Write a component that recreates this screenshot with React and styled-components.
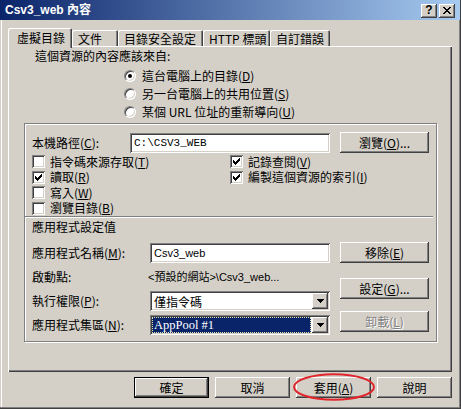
import React from "react";
import styled, { createGlobalStyle, css } from "styled-components";

const Global = createGlobalStyle`
  html, body { margin: 0; padding: 0; background: #d4d0c8; }
  body {
    font-family: "Noto Sans CJK TC", "Noto Sans", sans-serif;
    font-size: 12px;
    color: #000;
  }
  * { box-sizing: border-box; }
  u { text-decoration: underline; text-underline-offset: 1px; }
`;

const raised = css`
  box-shadow: inset -1px -1px #404040, inset 1px 1px #ffffff,
    inset -2px -2px #808080, inset 2px 2px #d4d0c8;
`;
const sunken = css`
  box-shadow: inset 1px 1px #808080, inset -1px -1px #ffffff,
    inset 2px 2px #404040, inset -2px -2px #d4d0c8;
`;

const Window = styled.div`
  position: relative;
  width: 461px;
  height: 409px;
  background: #d4d0c8;
  display: flex;
  flex-direction: column;
  overflow: hidden;
  box-shadow: inset -1px -1px #404040, inset -2px -2px #808080,
    inset 1px 0 #d4d0c8, inset 2px 0 #ffffff;
`;

const TitleBar = styled.div`
  flex: none;
  height: 20px;
  margin-right: 1px;
  display: flex;
  align-items: center;
  padding: 0 5px 0 5px;
  background: linear-gradient(to right, #0a246a 0%, #a6caf0 100%);
`;

const Title = styled.span`
  flex: 1;
  color: #fff;
  font-weight: bold;
  font-family: "Liberation Sans", "Noto Sans CJK TC", sans-serif;
  font-size: 12px;
  line-height: 14px;
  white-space: nowrap;
`;

const CapBtn = styled.div`
  width: 16px;
  height: 14px;
  margin-top: 1px;
  margin-left: ${(p) => p.$gap || 0}px;
  background: #d4d0c8;
  ${raised};
  display: flex;
  align-items: center;
  justify-content: center;
  font-family: "Liberation Sans", sans-serif;
  font-weight: bold;
  font-size: 12px;
  line-height: 12px;
  padding-bottom: 1px;
`;

const Body = styled.div`
  flex: 1;
  display: flex;
  flex-direction: column;
  padding: 8px 9px 0 8px;
`;

const TabStrip = styled.div`
  height: 18px;
  display: flex;
  align-items: flex-end;
  position: relative;
  z-index: 2;
`;

const Tab = styled.div`
  width: ${(p) => p.$w}px;
  height: ${(p) => (p.$active ? 20 : 16)}px;
  margin-bottom: ${(p) => (p.$active ? -2 : 0)}px;
  padding-left: ${(p) => (p.$active ? 9 : 6)}px;
  background: #d4d0c8;
  border-top-left-radius: 2px;
  border-top-right-radius: 2px;
  box-shadow: inset 1px 1px #ffffff, inset -1px 0 #404040, inset -2px 0 #808080;
  display: flex;
  align-items: center;
  line-height: 14px;
  white-space: nowrap;
  padding-top: ${(p) => (p.$active ? 0 : 1)}px;
  position: relative;
  z-index: ${(p) => (p.$active ? 3 : 1)};
`;

const Panel = styled.div`
  width: 444px;
  height: 326px;
  padding: 3px 0 0 16px;
  display: flex;
  flex-direction: column;
  box-shadow: inset 1px 1px #ffffff, inset -1px -1px #404040,
    inset -2px -2px #808080;
`;

const Text = styled.div`
  line-height: 14px;
  white-space: nowrap;
  margin-left: ${(p) => p.$ml || 0}px;
  margin-top: ${(p) => p.$mt || 0}px;
`;

const RadioList = styled.div`
  margin-top: 4px;
  margin-left: 100px;
  display: flex;
  flex-direction: column;
`;

const OptionRow = styled.label`
  height: ${(p) => p.$h || 18}px;
  display: flex;
  align-items: center;
  line-height: 14px;
  white-space: nowrap;
`;

const RadioCircle = styled.span`
  flex: none;
  width: 12px;
  height: 12px;
  margin-right: 6px;
  border-radius: 50%;
  background: #fff;
  border: 1px solid;
  border-color: #808080 #ffffff #ffffff #808080;
  box-shadow: inset 1px 1px #404040, inset -1px -1px #d4d0c8;
  display: flex;
  align-items: center;
  justify-content: center;
  &::after {
    content: "";
    display: ${(p) => (p.$on ? "block" : "none")};
    width: 4px;
    height: 4px;
    border-radius: 50%;
    background: #000;
  }
`;

const CheckBox = styled.span`
  flex: none;
  width: 13px;
  height: 13px;
  margin-right: 5px;
  background: #fff;
  ${sunken};
  display: block;
  svg { display: block; }
`;

const GroupBox = styled.div`
  width: 413px;
  height: 219px;
  margin-top: 2px;
  padding: 8px 0 0 7px;
  border: 1px solid #808080;
  box-shadow: 1px 1px 0 #ffffff, inset 1px 1px 0 #ffffff;
  display: flex;
  flex-direction: column;
`;

const PathRow = styled.div`
  display: grid;
  grid-template-columns: 98px 200px 89px;
  height: 21px;
  align-items: start;
`;

const RowLabel = styled.div`
  line-height: 14px;
  white-space: nowrap;
  align-self: center;
`;

const Field = styled.div`
  height: 20px;
  background: #fff;
  ${sunken};
  display: flex;
  align-items: center;
  padding: 0 4px;
  white-space: nowrap;
  font-family: ${(p) => p.$font || `"Noto Sans CJK TC", sans-serif`};
  font-size: ${(p) => p.$size || 12}px;
  align-self: center;
`;

const Button = styled.div`
  width: ${(p) => p.$w || 89}px;
  height: 21px;
  margin-left: ${(p) => p.$ml || 0}px;
  margin-top: ${(p) => p.$mt || 0}px;
  background: #d4d0c8;
  display: flex;
  align-items: center;
  justify-content: center;
  line-height: 14px;
  white-space: nowrap;
  ${(p) =>
    p.$default
      ? css`
          box-shadow: inset 0 0 0 1px #000000, inset -2px -2px #404040,
            inset 2px 2px #ffffff, inset -3px -3px #808080;
        `
      : raised};
  ${(p) =>
    p.$disabled &&
    css`
      color: #808080;
      text-shadow: 1px 1px 0 #ffffff;
    `}
`;

const CheckCols = styled.div`
  margin-top: 1px;
  display: flex;
`;

const CheckCol = styled.div`
  width: ${(p) => p.$w || "auto"};
  display: flex;
  flex-direction: column;
`;

const Separator = styled.div`
  height: 2px;
  margin: 0 3px 0 -7px;
  border-top: 1px solid #808080;
  border-bottom: 1px solid #ffffff;
`;

const AppArea = styled.div`
  margin-top: 8px;
  display: flex;
  align-items: flex-start;
`;

const AppGrid = styled.div`
  display: grid;
  grid-template-columns: 118px 180px;
  grid-auto-rows: 22px;
  row-gap: 2px;
`;

const StaticValue = styled.div`
  margin-left: -2px;
  align-self: center;
  white-space: nowrap;
  line-height: 14px;
  font-family: "Liberation Sans", "Noto Sans CJK TC", sans-serif;
  font-size: 11px;
`;

const ButtonCol = styled.div`
  margin-left: 10px;
  display: flex;
  flex-direction: column;
`;

const Select = styled.div`
  height: 20px;
  align-self: center;
  background: #fff;
  ${sunken};
  padding: 2px;
  display: flex;
  align-items: stretch;
`;

const SelValue = styled.div`
  flex: 1;
  display: flex;
  align-items: center;
  padding-left: 2px;
  margin-right: 1px;
  white-space: nowrap;
  ${(p) =>
    p.$hl &&
    css`
      background: #0a246a;
      color: #fff;
      outline: 1px dotted #e8e4b0;
      outline-offset: -1px;
      font-family: "Liberation Serif", serif;
      font-size: 12.5px;
    `}
`;

const DropBtn = styled.div`
  flex: none;
  width: 16px;
  height: 16px;
  background: #d4d0c8;
  ${raised};
  display: flex;
  align-items: center;
  justify-content: center;
  svg { display: block; }
`;

const ButtonRow = styled.div`
  margin-top: 5px;
  display: flex;
  justify-content: flex-end;
  gap: 6px;
`;

const Marked = styled.div`
  position: relative;
  svg.mark {
    position: absolute;
    left: -3px;
    top: -4px;
    pointer-events: none;
  }
`;

const Check = () => (
  <svg width="13" height="13" viewBox="0 0 13 13" shapeRendering="crispEdges">
    <path
      fill="#000"
      d="M9 3h1v1h-1z M8 4h2v1h-2z M3 5h1v1h-1z M7 5h3v1h-3z M3 6h2v1h-2z M6 6h3v1h-3z M3 7h5v1h-5z M4 8h3v1h-3z M5 9h1v1h-1z"
    />
  </svg>
);

const Arrow = () => (
  <svg width="7" height="4" viewBox="0 0 7 4" shapeRendering="crispEdges">
    <path fill="#000" d="M0 0h7v1h-7z M1 1h5v1h-5z M2 2h3v1h-3z M3 3h1v1h-1z" />
  </svg>
);

const CheckItem = ({ on, children }) => (
  <OptionRow $h={15.5}>
    <CheckBox>{on && <Check />}</CheckBox>
    {children}
  </OptionRow>
);

const RadioItem = ({ on, children }) => (
  <OptionRow $h={18}>
    <RadioCircle $on={on} />
    {children}
  </OptionRow>
);

const DropDown = ({ value, hl }) => (
  <Select>
    <SelValue $hl={hl}>{value}</SelValue>
    <DropBtn>
      <Arrow />
    </DropBtn>
  </Select>
);

export default function App() {
  const tabs = [
    { t: "虛擬目錄", w: 64, a: true },
    { t: "文件", w: 46 },
    { t: "目錄安全設定", w: 85 },
    { t: "HTTP 標頭", w: 67 },
    { t: "自訂錯誤", w: 60 },
  ];
  return (
    <>
      <Global />
      <Window>
        <TitleBar>
          <Title>Csv3_web 內容</Title>
          <CapBtn>?</CapBtn>
          <CapBtn $gap={2}>
            <svg width="8" height="7" viewBox="0 0 8 7" shapeRendering="crispEdges">
              <path
                fill="#000"
                d="M0 0h2v1h-2z M6 0h2v1h-2z M1 1h2v1h-2z M5 1h2v1h-2z M2 2h4v1h-4z M3 3h2v1h-2z M2 4h4v1h-4z M1 5h2v1h-2z M5 5h2v1h-2z M0 6h2v1h-2z M6 6h2v1h-2z"
              />
            </svg>
          </CapBtn>
        </TitleBar>
        <Body>
          <TabStrip>
            {tabs.map((tb) => (
              <Tab key={tb.t} $w={tb.w} $active={tb.a}>
                {tb.t}
              </Tab>
            ))}
          </TabStrip>
          <Panel>
            <Text $ml={11}>這個資源的內容應該來自:</Text>
            <RadioList>
              <RadioItem on>
                這台電腦上的目錄(<u>D</u>)
              </RadioItem>
              <RadioItem>
                另一台電腦上的共用位置(<u>S</u>)
              </RadioItem>
              <RadioItem>
                某個 URL 位址的重新導向(<u>U</u>)
              </RadioItem>
            </RadioList>
            <GroupBox>
              <PathRow>
                <RowLabel>
                  本機路徑(<u>C</u>):
                </RowLabel>
                <Field $font={`"Liberation Mono", monospace`} $size={11}>
                  C:\CSV3_WEB
                </Field>
                <Button $ml={10}>
                  瀏覽(<u>O</u>)...
                </Button>
              </PathRow>
              <CheckCols>
                <CheckCol $w="198px">
                  <CheckItem>
                    指令碼來源存取(<u>T</u>)
                  </CheckItem>
                  <CheckItem on>
                    讀取(<u>R</u>)
                  </CheckItem>
                  <CheckItem>
                    寫入(<u>W</u>)
                  </CheckItem>
                  <CheckItem>
                    瀏覽目錄(<u>B</u>)
                  </CheckItem>
                </CheckCol>
                <CheckCol>
                  <CheckItem on>
                    記錄查閱(<u>V</u>)
                  </CheckItem>
                  <CheckItem on>
                    編製這個資源的索引(<u>I</u>)
                  </CheckItem>
                </CheckCol>
              </CheckCols>
              <Separator />
              <Text $mt={2}>應用程式設定值</Text>
              <AppArea>
                <AppGrid>
                  <RowLabel>
                    應用程式名稱(<u>M</u>):
                  </RowLabel>
                  <Field $font={`"Liberation Sans", sans-serif`} $size={11}>
                    Csv3_web
                  </Field>
                  <RowLabel>啟動點:</RowLabel>
                  <StaticValue>&lt;預設的網站&gt;\Csv3_web...</StaticValue>
                  <RowLabel>
                    執行權限(<u>P</u>):
                  </RowLabel>
                  <DropDown value="僅指令碼" />
                  <RowLabel>
                    應用程式集區(<u>N</u>):
                  </RowLabel>
                  <DropDown value="AppPool #1" hl />
                </AppGrid>
                <ButtonCol>
                  <Button>
                    移除(<u>E</u>)
                  </Button>
                  <Button $mt={15}>
                    設定(<u>G</u>)...
                  </Button>
                  <Button $mt={12} $disabled>
                    卸載(<u>L</u>)
                  </Button>
                </ButtonCol>
              </AppArea>
            </GroupBox>
          </Panel>
          <ButtonRow>
            <Button $w={75} $default>
              確定
            </Button>
            <Button $w={75}>取消</Button>
            <Marked>
              <Button $w={75}>
                套用(<u>A</u>)
              </Button>
              <svg className="mark" width="82" height="28" viewBox="0 0 82 28">
                <ellipse
                  cx="41"
                  cy="14"
                  rx="40"
                  ry="12.8"
                  fill="none"
                  stroke="#e0262c"
                  strokeWidth="2"
                />
              </svg>
            </Marked>
            <Button $w={75}>說明</Button>
          </ButtonRow>
        </Body>
      </Window>
    </>
  );
}
